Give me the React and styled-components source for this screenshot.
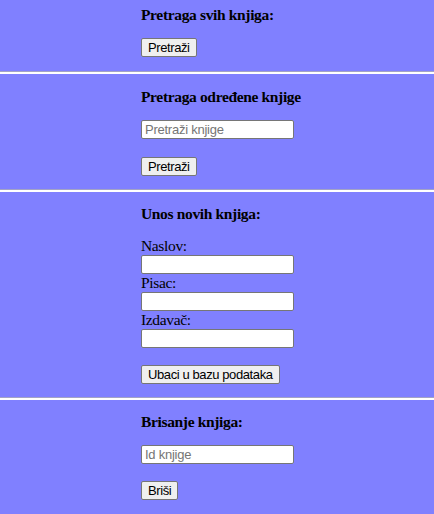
import styled, { createGlobalStyle } from 'styled-components'

const GlobalStyle = createGlobalStyle`
  html, body {
    margin: 0;
    padding: 0;
    background: #8080ff;
  }
  body {
    font-family: "Liberation Serif", "Times New Roman", serif;
    font-size: 15px;
    letter-spacing: -0.35px;
    color: #000;
  }
`

const Section = styled.section`
  display: flex;
  flex-direction: column;
  align-items: flex-start;
  padding: ${({ $top }) => $top}px 0 ${({ $bottom }) => $bottom}px 141px;
  background: #8080ff;
  border-bottom: ${({ $last }) => ($last ? 'none' : '2px solid #fff')};
  box-shadow: ${({ $last }) => ($last ? 'none' : 'inset 0 -1px 0 #a3a3c6')};
`

const Heading = styled.h4`
  margin: 0 0 14px 0;
  font-size: 15.5px;
  font-weight: bold;
  line-height: 18px;
`

const Label = styled.label`
  display: block;
  font-size: 15.5px;
  line-height: 18px;
`

const Input = styled.input`
  box-sizing: border-box;
  width: 153px;
  height: 19px;
  margin: 0;
  padding: 1px 3px;
  border: 1px solid #767676;
  border-radius: 2px;
  background: #fff;
  font-family: "Liberation Sans", Arial, sans-serif;
  font-size: 13px;
  letter-spacing: -0.25px;
  &::placeholder {
    color: #757575;
  }
`

const Button = styled.button`
  box-sizing: border-box;
  height: 19px;
  margin: ${({ $gap }) => $gap}px 0 0 0;
  padding: 0 6px;
  border: 1px solid #767676;
  border-radius: 2px;
  background: #efefef;
  color: #000;
  font-family: "Liberation Sans", Arial, sans-serif;
  font-size: 13px;
  letter-spacing: -0.4px;
  line-height: 15px;
`

const Field = ({ label }) => (
  <>
    <Label>{label}</Label>
    <Input type="text" />
  </>
)

export default function App () {
  return (
    <>
      <GlobalStyle />
      <Section $top={6} $bottom={15}>
        <Heading>Pretraga svih knjiga:</Heading>
        <Button $gap={0}>Pretraži</Button>
      </Section>
      <Section $top={14} $bottom={14}>
        <Heading>Pretraga određene knjige</Heading>
        <Input type="text" placeholder="Pretraži knjige" />
        <Button $gap={18}>Pretraži</Button>
      </Section>
      <Section $top={13} $bottom={14}>
        <Heading>Unos novih knjiga:</Heading>
        <Field label="Naslov:" />
        <Field label="Pisac:" />
        <Field label="Izdavač:" />
        <Button $gap={17}>Ubaci u bazu podataka</Button>
      </Section>
      <Section $top={13} $bottom={13} $last>
        <Heading>Brisanje knjiga:</Heading>
        <Input type="text" placeholder="Id knjige" />
        <Button $gap={17}>Briši</Button>
      </Section>
    </>
  )
}
